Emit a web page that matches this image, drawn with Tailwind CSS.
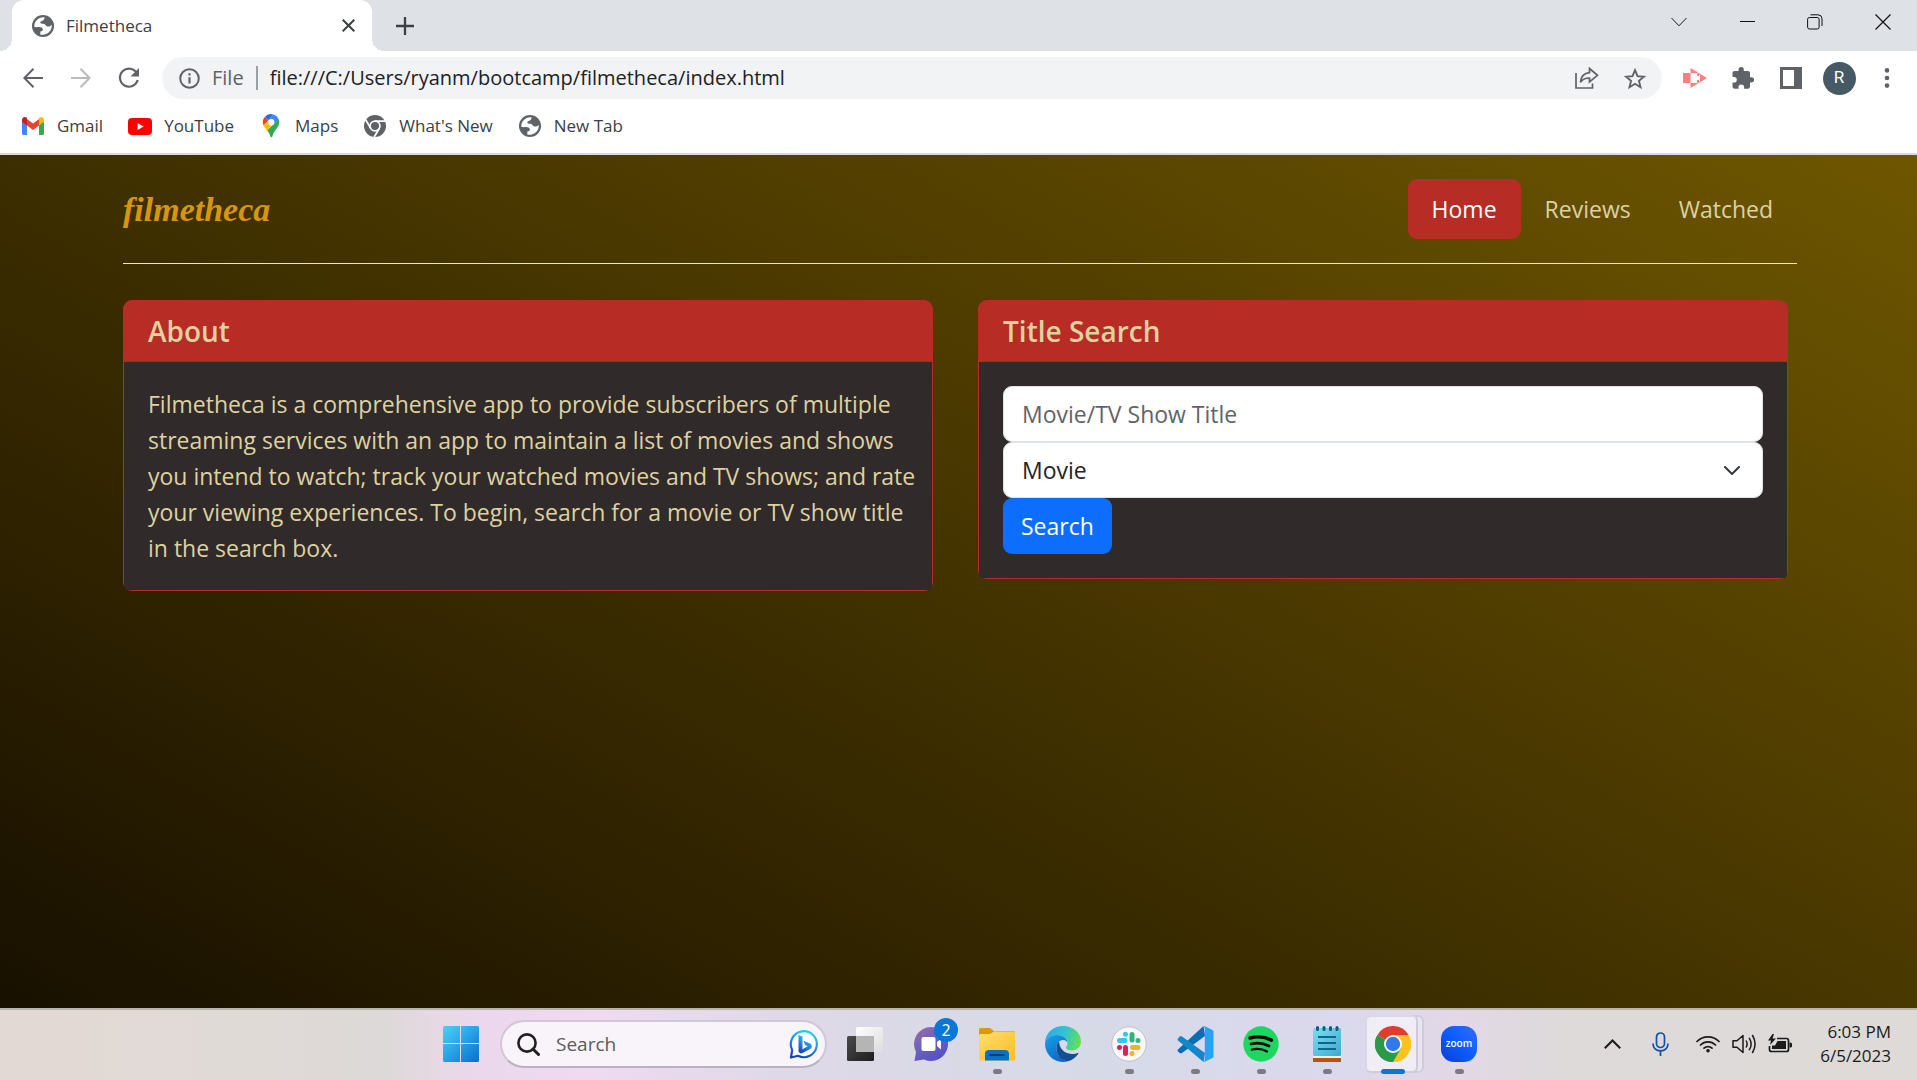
<!DOCTYPE html>
<html lang="en">
<head>
<meta charset="utf-8">
<meta name="viewport" content="width=device-width, initial-scale=1">
<title>Filmetheca</title>
<script src="https://cdn.jsdelivr.net/npm/@tailwindcss/browser@4"></script>
</head>
<body class="flex min-h-screen flex-col bg-white font-['Open_Sans',sans-serif] text-[#3c4043]">

<svg class="hidden" aria-hidden="true">
  <symbol id="globe" viewBox="0 0 22 22">
    <circle cx="11" cy="11" r="11" fill="#5f6368"/>
    <path d="M12.500 2.200C9 2 5.500 3.500 3.600 6.600 2.600 8.300 2.200 10 2.300 11.800c1.800.6 3.300.2 4.700.2 2.300 0 3.600.8 3.800 2.400.2 1.200-.6 1.700-2.300 1.800l-.3 3.200c4.500 1.300 9.300-1.200 11-5.400.6-1.500.7-2.900.5-4.200-1.300 1.600-3 2.200-4.900 1.400-1.300-.6-1.300-1.900-2.600-2.300-1.400-.4-3.200.2-3.800-1-.5-1.200.8-1.700 2-2.200 1.300-.6 2.300-1.600 2.100-3.500z" fill="#fff"/>
  </symbol>
</svg>

<!-- Tab strip -->
<div class="flex h-[51px] shrink-0 items-stretch bg-[#dee1e6]">
  <div class="relative ml-3 flex w-[360px] items-center rounded-t-xl bg-white pr-3 pl-5 text-[17px]">
    <span class="absolute bottom-0 -left-3 size-3 bg-[radial-gradient(circle_at_0_0,#dee1e6_12px,#fff_12px)]"></span>
    <span class="absolute -right-3 bottom-0 size-3 bg-[radial-gradient(circle_at_100%_0,#dee1e6_12px,#fff_12px)]"></span>
    <svg class="size-[22px]"><use href="#globe"/></svg>
    <span class="ml-3 flex-1">Filmetheca</span>
    <button aria-label="Close tab" class="grid size-6 place-items-center"><svg width="13" height="13" viewBox="0 0 13 13" stroke="#3c4043" stroke-width="2"><path d="M.7.7l11.600 11.600M12.300.7L.7 12.300"/></svg></button>
  </div>
  <button aria-label="New tab" class="ml-5 grid w-[26px] place-items-center"><svg width="18" height="18" viewBox="0 0 18 18" stroke="#3c4043" stroke-width="2.300"><path d="M9 0v18M0 9h18"/></svg></button>
  <div class="ml-auto flex h-[43px]">
    <button aria-label="Search tabs" class="grid w-[68px] place-items-center"><svg width="16" height="10" viewBox="0 0 16 10" fill="none" stroke="#1b1b1b"><path d="M.5 1L8 8.800 15.500 1"/></svg></button>
    <button aria-label="Minimize" class="grid w-[68px] place-items-center"><svg width="15" height="2" viewBox="0 0 15 2"><path d="M0 0h15v1H0z" fill="#111"/></svg></button>
    <button aria-label="Restore" class="grid w-[68px] place-items-center"><svg width="16" height="16" viewBox="0 0 16 16" fill="none" stroke="#111"><rect x=".6" y="3.500" width="11.500" height="11.500" rx="1.800"/><path d="M3.500 .8h7.500a4 4 0 0 1 4 4v7.200"/></svg></button>
    <button aria-label="Close" class="grid w-[68px] place-items-center"><svg width="16" height="16" viewBox="0 0 16 16" stroke="#111" stroke-width="1.200"><path d="M.5.5l15 15M15.500.5l-15 15"/></svg></button>
  </div>
</div>

<!-- Toolbar -->
<div class="flex h-[54px] shrink-0 items-center pr-1.5 pl-[9px]">
  <button aria-label="Back" class="grid w-12 place-items-center"><svg width="20" height="20" viewBox="0 0 20 20" fill="none" stroke="#5f6368" stroke-width="2"><path d="M20 10H1.500M10.500 .8L1.400 10l9.100 9.200"/></svg></button>
  <button aria-label="Forward" class="grid w-12 place-items-center"><svg width="20" height="20" viewBox="0 0 20 20" fill="none" stroke="#b9bbbe" stroke-width="2"><path d="M0 10h18.500M9.500 .8l9.100 9.200-9.100 9.200"/></svg></button>
  <button aria-label="Reload" class="grid w-12 place-items-center"><svg width="22" height="22" viewBox="0 0 22 22" fill="none" stroke="#5f6368" stroke-width="2.200"><path d="M18.800 6.200A9 9 0 1 0 19.700 13"/><path d="M21 1v8.500h-8.500z" fill="#5f6368" stroke="none"/></svg></button>
  <div class="ml-[9px] flex h-[42px] flex-1 items-center rounded-full bg-[#f1f3f4] pr-[3px] pl-[17px] text-xl">
    <svg width="21" height="21" viewBox="0 0 21 21" fill="none" stroke="#5f6368" stroke-width="2"><circle cx="10.500" cy="10.500" r="9.300"/><path d="M10.500 9.200v6.300M10.500 5.300v2.200" stroke-width="2.200"/></svg>
    <span class="pl-3 text-[#5f6368]">File</span>
    <span class="mx-3 h-6 w-0.5 bg-[#9aa0a6]"></span>
    <input aria-label="Address" class="min-w-0 flex-1 bg-transparent text-[#202124] outline-none" value="file:///C:/Users/ryanm/bootcamp/filmetheca/index.html">
    <button aria-label="Share" class="grid w-12 place-items-center"><svg width="24" height="22" viewBox="0 0 24 22" fill="none" stroke="#5f6368" stroke-width="1.700"><path d="M1 6v15h16.500v-4.500"/><path d="M14.500 1.500L22.500 8.300l-8 6.700v-4c-4 0-7 1-9 4.200.4-5.200 3.200-9 9-9.600z"/></svg></button>
    <button aria-label="Bookmark this page" class="grid w-12 place-items-center"><svg width="22" height="21" viewBox="0 0 22 21" fill="none" stroke="#5f6368" stroke-width="1.900"><path d="M11 2.200l2.500 6 6.400.5-4.900 4.200 1.500 6.300-5.500-3.400-5.500 3.400 1.500-6.300-4.900-4.200 6.400-.5z"/></svg></button>
  </div>
  <div class="ml-[9px] flex items-center">
    <button aria-label="Screen recorder" class="grid w-12 place-items-center"><svg width="24" height="20" viewBox="0 0 24 20" fill="#ff7f80"><path d="M7.500 0L24 10 7.500 20z"/><path d="M8 5h5.500l3.500 2v6l-3.500 2H8z" fill="#fff"/><path d="M0 5h7v10H0z"/><path d="M14 6h2v2h-2zM14 12h2v2h-2z"/></svg></button>
    <button aria-label="Extensions" class="grid w-12 place-items-center"><svg width="22" height="22" viewBox="0 0 22 22" fill="#5f6368"><path d="M19.500 10.300H18V6c0-1.200-.9-2.100-2.100-2.100h-4.100V2.600a2.600 2.600 0 0 0-5.200 0v1.300H2.600C1.400 3.900.5 4.800.5 6v3.900H2a2.800 2.800 0 0 1 0 5.600H.5v4.100c0 1.200.9 2.100 2.100 2.100h3.900v-1.500a2.800 2.800 0 0 1 5.600 0v1.500h3.800c1.200 0 2.100-.9 2.100-2.100v-4.100h1.500a2.600 2.600 0 0 0 0-5.200z"/></svg></button>
    <button aria-label="Side panel" class="grid w-12 place-items-center"><svg width="22" height="22" viewBox="0 0 22 22"><path d="M0 0h22v22H0z" fill="#5f6368"/><path d="M3 3h11v16H3z" fill="#fff"/></svg></button>
    <button aria-label="Profile" class="grid w-12 place-items-center"><span class="grid size-[33px] place-items-center rounded-full bg-[#455a64] font-['Roboto',sans-serif] text-[17px] text-white">R</span></button>
    <button aria-label="Menu" class="grid w-12 place-items-center"><svg width="6" height="20" viewBox="0 0 6 20" fill="#5f6368"><circle cx="3" cy="2.400" r="2.300"/><circle cx="3" cy="10" r="2.300"/><circle cx="3" cy="17.600" r="2.300"/></svg></button>
  </div>
</div>

<!-- Bookmarks bar -->
<nav class="flex h-[50px] shrink-0 items-center gap-[25px] border-b-2 border-[#d9dadc] pb-1.5 pl-[21px] text-[17px]">
  <a href="#" class="flex items-center gap-3"><svg width="24" height="18" viewBox="0 0 24 18"><path d="M1 3v13.500C1 17.300 1.700 18 2.500 18H6V8z" fill="#4285f4"/><path d="M23 3v13.500c0 .8-.7 1.500-1.500 1.500H18V8z" fill="#34a853"/><path d="M6 8.500V2l6 4.500L18 2v6.500L12 13z" fill="#ea4335"/><path d="M1 3c0-2.500 2.700-3.700 4.500-2.400L6 1v7.500L1 4.800z" fill="#c5221f"/><path d="M23 3c0-2.500-2.700-3.700-4.500-2.400L18 1v7.500l5-3.700z" fill="#fbbc04"/></svg>Gmail</a>
  <a href="#" class="flex items-center gap-3"><svg width="24" height="17" viewBox="0 0 24 17"><rect width="24" height="17" rx="4" fill="#f00"/><path d="M9.600 5v7l6-3.500z" fill="#fff"/></svg>YouTube</a>
  <a href="#" class="flex items-center gap-3"><svg width="24" height="24" viewBox="0 0 24 24"><path d="M14.400.6A8.200 8.200 0 0 0 5.700 3l3.900 3.300z" fill="#1a73e8"/><path d="M5.700 3a8 8 0 0 0-1.100 8.600l5-5.300z" fill="#ea4335"/><path d="M14.400.6L9.600 6.300l5.300 4 4.700-5.400A8.100 8.100 0 0 0 14.400.6z" fill="#4285f4"/><path d="M4.600 11.600c.8 1.800 2.200 3.200 3.500 5l6.800-8-5.300-2.300z" fill="#fbbc04"/><path d="M19.600 4.900c2.200 5.200-1 8.200-3.300 11.400-1.700 2.400-2.300 3.700-2.800 5.900-.3 1.500-1.900 1.500-2.300 0-.5-2.300-1.300-3.500-3.100-5.600z" fill="#34a853"/><circle cx="12.300" cy="8.200" r="3.100" fill="#fff"/></svg>Maps</a>
  <a href="#" class="flex items-center gap-3"><svg width="24" height="22" viewBox="0 0 24 22"><circle cx="12" cy="11" r="11" fill="#5f6368"/><circle cx="12" cy="11" r="4.900" fill="none" stroke="#fff" stroke-width="1.700"/><path d="M12 6.100h10M7.800 13.500L2.700 4.800M16.200 13.500L11.200 22" stroke="#fff" stroke-width="1.700"/></svg>What's New</a>
  <a href="#" class="flex items-center gap-3"><svg class="mx-px size-[22px]"><use href="#globe"/></svg>New Tab</a>
</nav>

<!-- Page -->
<main class="flex-1 bg-[linear-gradient(30deg,#181000,#6e5600)] pr-[120px] pl-[123px] text-[23px] text-[#ddd2a0]">
  <header class="flex items-center justify-between border-b border-[#e9e5cd] py-6">
    <a href="#" class="font-['Liberation_Serif',serif] text-[34px] font-bold text-[#d6960f] italic">filmetheca</a>
    <nav class="flex leading-9">
      <a href="#" class="rounded-[9px] bg-[#b72d25] px-6 py-3 text-white">Home</a>
      <a href="#" class="px-6 py-3">Reviews</a>
      <a href="#" class="px-6 py-3">Watched</a>
    </nav>
  </header>

  <div class="mt-9 grid grid-cols-2 items-start gap-[45px] pr-[9px]">
    <section class="rounded-[9px] border border-[#b72d25] bg-[#b72d25]">
      <h2 class="border-b border-[#a82a24] px-6 py-3 text-[28px] leading-9 font-semibold">About</h2>
      <p class="rounded-b-sm bg-[#312a2a] py-6 pr-4 pl-6 leading-9">Filmetheca is a comprehensive app to provide subscribers of multiple streaming services with an app to maintain a list of movies and shows you intend to watch; track your watched movies and TV shows; and rate your viewing experiences. To begin, search for a movie or TV show title in the search box.</p>
    </section>

    <section class="rounded-[9px] border border-[#b72d25] bg-[#b72d25]">
      <h2 class="border-b border-[#a82a24] px-6 py-3 text-[28px] leading-9 font-semibold">Title Search</h2>
      <form class="flex flex-col items-start rounded-b-sm bg-[#312a2a] p-6">
        <input type="text" aria-label="Movie/TV Show Title" placeholder="Movie/TV Show Title" class="h-14 w-full rounded-[9px] border border-[#dee2e6] bg-white px-[18px] text-[#212529] placeholder:text-[#5f6468]">
        <div class="relative w-full">
          <select aria-label="Type" class="h-14 w-full appearance-none rounded-[9px] border border-[#dee2e6] bg-white px-[18px] text-[#212529]">
            <option>Movie</option>
            <option>TV Show</option>
          </select>
          <svg class="pointer-events-none absolute top-6 right-[23px]" width="16" height="10" viewBox="0 0 16 10" fill="none" stroke="#343a40" stroke-width="2" stroke-linecap="round" stroke-linejoin="round"><path d="M1 1l7 7 7-7"/></svg>
        </div>
        <button type="button" class="h-14 rounded-[9px] bg-[#0d6efd] px-[18px] text-white">Search</button>
      </form>
    </section>
  </div>
</main>

<!-- Taskbar -->
<footer class="grid h-[72px] shrink-0 grid-cols-[1fr_auto_1fr] items-center border-t-2 border-[#b7b4b0] bg-[linear-gradient(90deg,#e3d9d4_0%,#e0dad6_12%,#ddd9d8_20%,#ecd8ec_25%,#efdaf2_31%,#ded9e6_41%,#d6dae7_57%,#dbd9ed_70%,#e2d8e6_76%,#dddad9_82%,#dddad8_100%)] text-[#1b1b1b]">
  <div></div>
  <div class="flex h-[70px] items-center pb-0.5 pl-[3px]">
    <button aria-label="Start" class="grid w-[66px] place-items-center">
      <svg width="36" height="36" viewBox="0 0 36 36"><defs><linearGradient id="win" x1="0" y1="0" x2="1" y2="1"><stop stop-color="#4cd2fc"/><stop offset="1" stop-color="#0370d0"/></linearGradient></defs><path d="M1.500 0H17v17H0V1.500Q0 0 1.500 0zM18 0h16.500Q36 0 36 1.500V17H18zM0 18h17v18H1.500Q0 36 0 34.500zM18 18h18v16.500q0 1.500-1.500 1.500H18z" fill="url(#win)"/></svg>
    </button>
    <label class="mr-[5px] ml-1.5 flex h-12 w-[327px] items-center rounded-full border-2 border-[#d2c7d6] border-b-[#b9b3c1] bg-[#f8f4fa] pr-1.5 pl-[15px]">
      <svg width="23" height="23" viewBox="0 0 23 23" fill="none" stroke="#202020" stroke-width="2.600"><circle cx="10" cy="10" r="8.600"/><path d="M16 16l5.500 5.500" stroke-width="3" stroke-linecap="round"/></svg>
      <input type="text" aria-label="Search" placeholder="Search" class="ml-4 min-w-0 flex-1 bg-transparent text-[19px] outline-none placeholder:text-[#5c5a60]">
      <svg width="30" height="30" viewBox="0 0 30 30" fill="none"><defs><linearGradient id="bing" x1=".7" y1="0" x2=".3" y2="1"><stop stop-color="#21d3ee"/><stop offset=".55" stop-color="#2a80ea"/><stop offset="1" stop-color="#1743c4"/></linearGradient></defs><path d="M2 28.500l1.200-7.500A13 13 0 1 1 9 26.800z" fill="#fff" stroke="url(#bing)" stroke-width="2.200" stroke-linejoin="round"/><path d="M9.500 6l4 1.500v12.700l5.200-3-2.600-1.200-1.600-4.200 7.300 2.900c1.400 1.400 1.400 3.700-.2 5L13.600 24c-2 1-4.100-.3-4.100-2.500z" fill="url(#bing)"/></svg>
    </label>
    <button aria-label="Task view" class="grid w-[66px] place-items-center">
      <svg width="36" height="34" viewBox="0 0 36 34"><defs><linearGradient id="tv" x1="0" y1="0" x2="1" y2="1"><stop stop-color="#4b4b4b"/><stop offset="1" stop-color="#1d1d1d"/></linearGradient><linearGradient id="tw" x1="0" y1="0" x2="1" y2="1"><stop stop-color="#fff"/><stop offset="1" stop-color="#dcdcdc"/></linearGradient></defs><rect y="9" width="27" height="25" rx="1.500" fill="url(#tv)"/><rect x="9" width="27" height="25" rx="1.500" fill="url(#tw)"/><path d="M9 9h18v16H10.500Q9 25 9 23.500z" fill="#b5b5b5"/></svg>
    </button>
    <button aria-label="Chat, 2 new" class="relative grid w-[66px] place-items-center">
      <svg width="36" height="36" viewBox="0 0 36 36"><defs><linearGradient id="chat" x1="0" y1="0" x2=".7" y2="1"><stop stop-color="#a06ba6"/><stop offset=".5" stop-color="#6a62bd"/><stop offset="1" stop-color="#5350c4"/></linearGradient></defs><path d="M18 1a17 17 0 1 1-7 32.500L1.500 35 3 26A17 17 0 0 1 18 1z" fill="url(#chat)"/><rect x="8.500" y="11" width="14" height="14" rx="2" fill="#fff"/><path d="M24 16l4-3.500v11L24 20z" fill="#fff"/></svg>
      <span class="absolute -top-2 right-1.5 grid size-6 place-items-center rounded-full bg-[#0a76d5] text-base text-white">2</span>
    </button>
    <button aria-label="File Explorer" class="relative grid h-[58px] w-[66px] place-items-center">
      <svg width="36" height="34" viewBox="0 0 36 34"><defs><linearGradient id="fo" x1="0" y1="0" x2="1" y2="1"><stop stop-color="#ffdd70"/><stop offset="1" stop-color="#fdbe23"/></linearGradient></defs><path d="M0 2.500Q0 1 1.500 1H11l4 3h19.500Q36 4 36 5.500V12H0z" fill="#dc9a09"/><path d="M1.500 7H11l4-2.500h19.500Q36 4.500 36 6v26q0 1.500-1.500 1.500h-33Q0 33.500 0 32V8.500Q0 7 1.500 7z" fill="url(#fo)"/><path d="M6 33.500V27q0-4 4-4h16q4 0 4 4v6.500z" fill="#0c70c2"/><path d="M11 28h14" stroke="#063f7c" stroke-width="1.800" stroke-linecap="round"/></svg>
      <span class="absolute -bottom-px left-[29px] h-[5px] w-[9px] rounded-full bg-[#7d7b82]"></span>
    </button>
    <button aria-label="Edge" class="grid w-[66px] place-items-center">
      <svg width="36" height="36" viewBox="0 0 36 36"><defs><linearGradient id="e1" x1="0" y1=".3" x2="1" y2=".5"><stop stop-color="#2ba9ea"/><stop offset=".5" stop-color="#2fc3d4"/><stop offset="1" stop-color="#64e052"/></linearGradient><linearGradient id="e2" x1="0" y1="0" x2=".6" y2="1"><stop stop-color="#1ca0e4"/><stop offset="1" stop-color="#0968cc"/></linearGradient></defs><path d="M0 17C0 7 8.500 0 18 0c10.500 0 18 7 18 15.500C36 21 32 24.500 27 24.500c-4 0-6-1.500-6-2.700 0-1 1.500-1.500 1.500-4.300 0-4.500-4-8.500-10-8.500C6 9 1 12.500 0 17z" fill="url(#e1)"/><path d="M0 17.500C1 12 6 9 12 9c6.500 0 10.500 4 10.500 8 0-1-1.500-3-4.500-3-4 0-6.500 4-6.500 8.500C11.500 30 17 35 23 35.300 12 38.500 0 30.500 0 17.500z" fill="url(#e2)"/><path d="M14 15.500c-1.700 1.500-2.500 4-2.500 7C11.500 30 17 35.300 23 35.300c4-1 8-4 10.300-7.600.3-.6-.2-1-.8-.7C27 29.500 15 28 14 15.500z" fill="#134e96"/></svg>
    </button>
    <button aria-label="Slack" class="relative grid h-[58px] w-[66px] place-items-center">
      <svg width="36" height="36" viewBox="0 0 36 36"><circle cx="18" cy="18" r="17.200" fill="#f8f8f8" stroke="#c2c0c6"/><g stroke-width="5" stroke-linecap="round"><path d="M14.500 8.200v0M8.500 14.500H14" stroke="#36c5f0"/><path d="M21 8.500V14M27 14.500v0" stroke="#2eb67d"/><path d="M21.500 21.500H27M21 27.500v0" stroke="#ecb22e"/><path d="M14.500 21.500V27.500M8.500 21.500v0" stroke="#e01e5a"/></g></svg>
      <span class="absolute -bottom-px left-[29px] h-[5px] w-[9px] rounded-full bg-[#7d7b82]"></span>
    </button>
    <button aria-label="Visual Studio Code" class="relative grid h-[58px] w-[66px] place-items-center">
      <svg width="37" height="36" viewBox="0 0 37 36"><path d="M1 23.500L26.500 0 28 10 5 27q-1.200.8-2.300-.1L1 25.500q-1-1 0-2z" fill="#0a6db4"/><path d="M1 12.500l1.700-2q1.100-.9 2.300-.1L28 27l-1.500 9L1 14.500q-1-1 0-2z" fill="#1387cc"/><path d="M26.500.2q.6-.3 1.300 0L35.500 4q1 .5 1 1.600v24.800q0 1.100-1 1.600l-7.700 3.800q-.7.3-1.300 0 1.300-.5 1.300-2V2q0-1.300-1.300-1.800z" fill="#27a4f0"/></svg>
      <span class="absolute -bottom-px left-[29px] h-[5px] w-[9px] rounded-full bg-[#7d7b82]"></span>
    </button>
    <button aria-label="Spotify" class="relative grid h-[58px] w-[66px] place-items-center">
      <svg width="36" height="36" viewBox="0 0 36 36" fill="none" stroke="#0a0a0a" stroke-linecap="round"><circle cx="18" cy="18" r="17.700" fill="#1ed760" stroke="none"/><path d="M7 12c7.500-2 15-1.300 21.500 2.200" stroke-width="3.400"/><path d="M8 18c6.500-1.700 12.500-1 18 2" stroke-width="2.800"/><path d="M8.800 23.600c5.500-1.300 10.500-.8 15.200 1.900" stroke-width="2.300"/></svg>
      <span class="absolute -bottom-px left-[29px] h-[5px] w-[9px] rounded-full bg-[#7d7b82]"></span>
    </button>
    <button aria-label="Notepad" class="relative grid h-[58px] w-[66px] place-items-center">
      <svg width="28" height="36" viewBox="0 0 28 36"><defs><linearGradient id="np" x1="0" y1="0" x2="1" y2="1"><stop stop-color="#7fdcf0"/><stop offset="1" stop-color="#3fa9cd"/></linearGradient></defs><path d="M0 30h28v6H0z" fill="#b5560f"/><path d="M0 28h28v4H0z" fill="#f1f1f1"/><rect y="2" width="28" height="28" rx="1.500" fill="url(#np)"/><path d="M5 11h18M5 17h18M5 23h18" stroke="#0b6690" stroke-width="1.800"/><path d="M4.500 1.500v2M11 1.500v2M17.500 1.500v2M24 1.500v2" stroke="#0d5c80" stroke-width="3" stroke-linecap="round"/></svg>
      <span class="absolute -bottom-px left-[29px] h-[5px] w-[9px] rounded-full bg-[#7d7b82]"></span>
    </button>
    <button aria-label="Chrome" class="relative grid h-[58px] w-[66px] place-items-center">
      <span class="absolute inset-y-0 right-0.5 left-5 rounded-md border-2 border-[#d0ccda] bg-[#e9e5f1]"></span>
      <span class="absolute inset-y-0 right-2 left-[5px] rounded-md border-2 border-t-[#dcd7e4] border-r-[#cfcbd8] border-b-[#cfcbd8] border-l-[#dcd7e4] bg-[#f1edf7]"></span>
      <svg class="relative" width="36" height="36" viewBox="0 0 36 36"><path d="M18 18L2.400 9A18 18 0 0 1 33.600 9z" fill="#e33b2e"/><path d="M18 18l15.600-9A18 18 0 0 1 18 36z" fill="#fcc31e"/><path d="M18 18v18A18 18 0 0 1 2.400 9z" fill="#2a9a48"/><path d="M18 9h15.600A18 18 0 0 1 18 36l7.800-13.500z" fill="#fcc31e"/><path d="M10.200 22.500L2.400 9A18 18 0 0 0 18 36l7.800-13.500z" fill="#2a9a48"/><circle cx="18" cy="18" r="9" fill="#fff"/><circle cx="18" cy="18" r="7.200" fill="#3079ec"/></svg>
      <span class="absolute -bottom-px left-[21px] h-[5px] w-6 rounded-full bg-[#0a76d5]"></span>
    </button>
    <button aria-label="Zoom" class="relative grid h-[58px] w-[66px] place-items-center">
      <span class="grid size-9 place-items-center rounded-[13px] bg-linear-to-tr from-[#0a3fd0] via-[#0b5cff] to-[#2f6cff] pb-0.5 text-[10px] leading-none font-semibold text-white">zoom</span>
      <span class="absolute -bottom-px left-[29px] h-[5px] w-[9px] rounded-full bg-[#7d7b82]"></span>
    </button>
  </div>
  <div class="flex items-center justify-end pr-[26px] pb-0.5">
    <button aria-label="Show hidden icons" class="grid w-12 place-items-center"><svg width="17" height="10" viewBox="0 0 17 10" fill="none" stroke="#1b1b1b" stroke-width="2"><path d="M.8 9.200l7.700-7.700 7.700 7.700"/></svg></button>
    <button aria-label="Microphone" class="mr-3 grid w-12 place-items-center"><svg width="17" height="24" viewBox="0 0 17 24" fill="none" stroke="#0f50ad" stroke-width="1.700"><rect x="4.500" y="1" width="8" height="14.500" rx="4"/><path d="M1 11.500c0 4.500 3 7.300 7.500 7.300s7.500-2.800 7.500-7.300M8.500 18.800V24"/></svg></button>
    <button aria-label="Network, volume and battery" class="mr-7 flex items-center gap-3">
      <svg width="24" height="18" viewBox="0 0 24 18" fill="none" stroke="#1b1b1b" stroke-width="1.700" stroke-linecap="round"><path d="M1 6.500a15.600 15.600 0 0 1 22 0M4.500 10a10.600 10.600 0 0 1 15 0M8 13.200a5.800 5.800 0 0 1 8 0"/><circle cx="12" cy="15.800" r="1.800" fill="#1b1b1b" stroke="none"/></svg>
      <svg width="24" height="20" viewBox="0 0 24 20" fill="none" stroke="#1b1b1b" stroke-width="1.500" stroke-linecap="round" stroke-linejoin="round"><path d="M1 6.800h4L11 1.500v17L5 13.200H1z"/><path d="M14.300 7q1.600 3 0 6M17.400 4.300q3.500 5.700 0 11.400M20.600 1.500q5 8.500 0 17"/></svg>
      <svg width="24" height="20" viewBox="0 0 24 20"><path d="M9 4.500h9.500q2 0 2 2v9q0 2-2 2h-15q-2 0-2-2V12" fill="none" stroke="#1b1b1b" stroke-width="1.700"/><path d="M9.500 7H18v8H4v-3.500h3z" fill="#1b1b1b"/><path d="M21.500 8.500h1q1.500 0 1.500 1.500v2q0 1.500-1.500 1.500h-1zM4.500 0L0 6.500h3L2 11l6-6.500H4.500L6 0z" fill="#1b1b1b"/></svg>
    </button>
    <button class="text-right text-[17px] leading-6">6:03 PM<br>6/5/2023</button>
  </div>
</footer>
</body>
</html>
